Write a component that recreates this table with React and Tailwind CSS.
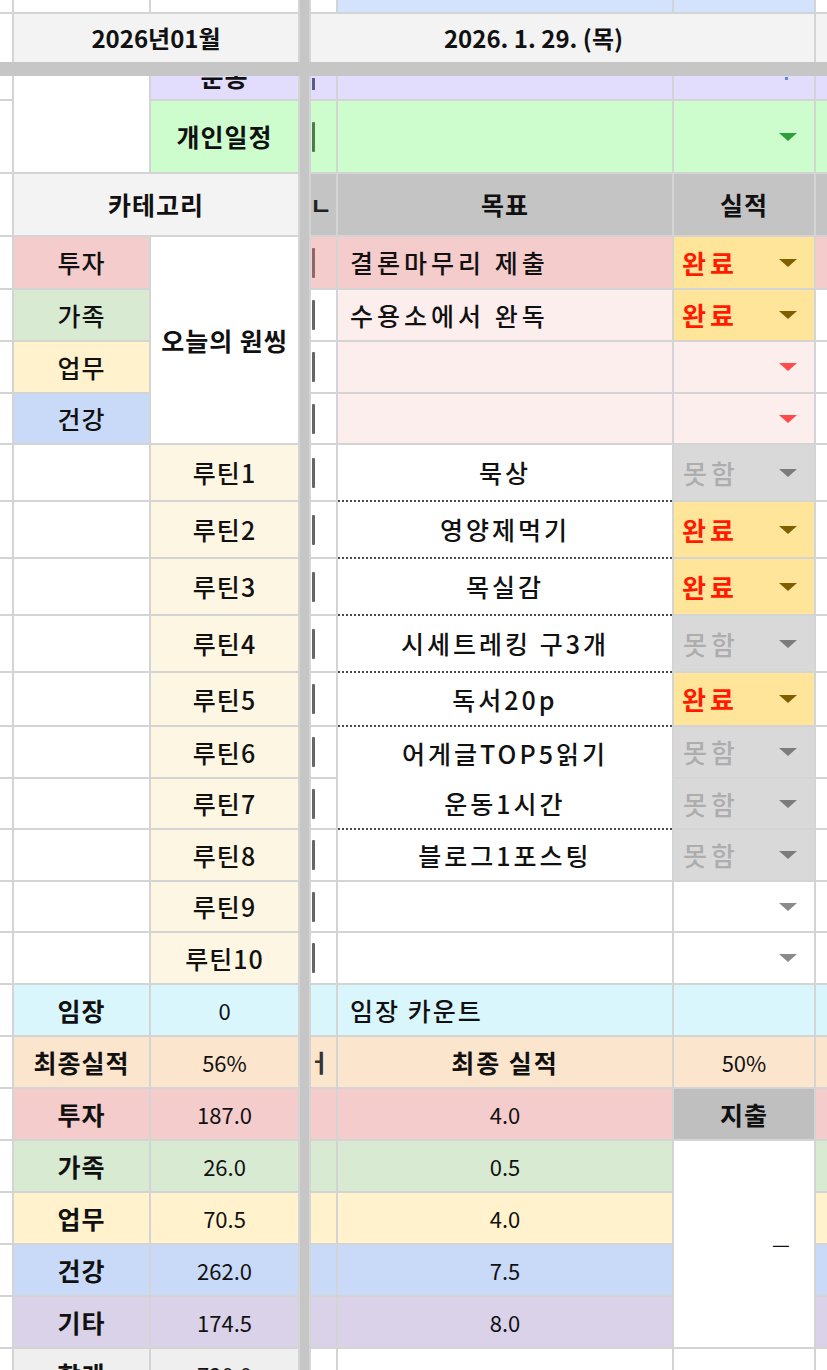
import React from "react";

// column template shared by the frozen header and the body
const GRID =
  "grid grid-cols-[12px_135px_147px_9px_25px_334px_140px_11px] gap-[2px] bg-[#d4d4d4]";

const categories = [
  { label: "투자", bg: "bg-[#f4cccc]", goal: "결론마무리 제출", goalBg: "bg-[#f4cccc]", status: "완료", edge: "bg-[#f4cccc]", sliver: "bg-[#8d6868]" },
  { label: "가족", bg: "bg-[#d9ead3]", goal: "수용소에서 완독", goalBg: "bg-[#fdeeee]", status: "완료", edge: "bg-white", sliver: "bg-[#666666]" },
  { label: "업무", bg: "bg-[#fff2cc]", goal: "", goalBg: "bg-[#fdeeee]", status: "pink", edge: "bg-white", sliver: "bg-[#666666]" },
  { label: "건강", bg: "bg-[#c9daf8]", goal: "", goalBg: "bg-[#fdeeee]", status: "pink", edge: "bg-white", sliver: "bg-[#666666]" },
];

const routines = [
  { name: "묵상", status: "못함", line: "dotted" },
  { name: "영양제먹기", status: "완료", line: "dotted" },
  { name: "목실감", status: "완료", line: "dotted" },
  { name: "시세트레킹 구3개", status: "못함", line: "dotted" },
  { name: "독서20p", status: "완료", line: "dotted" },
  { name: "어게글TOP5읽기", status: "못함", line: "blank" },
  { name: "운동1시간", status: "못함", line: "dotted" },
  { name: "블로그1포스팅", status: "못함", line: "none" },
  { name: "", status: "white", line: "none" },
  { name: "", status: "white", line: "none" },
];

const lineClass = {
  dotted: "-mb-[2px] border-b-2 border-dotted border-[#4a4a4a]",
  blank: "-mb-[2px]",
  none: "",
};

const totals = [
  { label: "투자", total: "187.0", today: "4.0", bg: "bg-[#f4cccc]" },
  { label: "가족", total: "26.0", today: "0.5", bg: "bg-[#d9ead3]" },
  { label: "업무", total: "70.5", today: "4.0", bg: "bg-[#fff2cc]" },
  { label: "건강", total: "262.0", today: "7.5", bg: "bg-[#c9daf8]" },
  { label: "기타", total: "174.5", today: "8.0", bg: "bg-[#d9d2e9]" },
];

const Arrow = ({ color }) => (
  <svg width="18" height="8" viewBox="0 0 18 8" className="shrink-0">
    <polygon points="0,0 18,0 9,8" fill={color} />
  </svg>
);

const Sliver = ({ className = "bg-[#666666]" }) => (
  <span className={`block w-[3px] h-[30px] ml-[1px] rounded-[1px] ${className}`} />
);

// dropdown cell in the 실적 column
const Status = ({ status }) => {
  if (status === "완료")
    return (
      <div className="bg-[#ffe599] flex items-center justify-between pl-[8px] pr-[17px]">
        <span className="text-[26px] font-bold text-[#ff1a00] tracking-[4px] leading-none">완료</span>
        <Arrow color="#7f6000" />
      </div>
    );
  if (status === "못함")
    return (
      <div className="bg-[#d9d9d9] flex items-center justify-between pl-[9px] pr-[17px]">
        <span className="text-[26px] font-medium text-[#adadad] tracking-[4px] leading-none">못함</span>
        <Arrow color="#7c7c7c" />
      </div>
    );
  if (status === "pink")
    return (
      <div className="bg-[#fdeeee] flex items-center justify-end pr-[17px]">
        <Arrow color="#ff4a4a" />
      </div>
    );
  return (
    <div className="bg-white flex items-center justify-end pr-[17px]">
      <Arrow color="#8a8a8a" />
    </div>
  );
};

const App = () => {
  return (
    <div className="w-[827px] h-[1370px] overflow-hidden bg-white text-[#111] font-['Noto_Sans_CJK_KR','Noto_Sans',sans-serif]">
      {/* frozen header rows */}
      <div className={`${GRID} grid-rows-[12px_48px]`}>
        <div className="col-start-4 row-span-full bg-[#c6c6c6]" />
        <div className="bg-white" />
        <div className="bg-white" />
        <div className="bg-white" />
        <div className="bg-white" />
        <div className="bg-[#d3e3fd]" />
        <div className="bg-[#d3e3fd]" />
        <div className="bg-white" />

        <div className="bg-white" />
        <div className="col-span-2 bg-[#f3f3f3] flex items-center justify-center text-[24px] font-bold leading-none">
          2026년01월
        </div>
        <div className="col-span-3 bg-[#f3f3f3] flex items-center justify-center pr-[58px] text-[24px] font-bold leading-none">
          2026. 1. 29. (목)
        </div>
        <div className="bg-[#f3f3f3]" />
      </div>

      {/* frozen pane divider */}
      <div className="h-[14px] bg-[#c6c6c6]" />

      <div
        className={`${GRID} grid-rows-[23px_71px_61px_51px_50px_50px_49px_55px_55px_55px_55px_52px_50px_49px_50px_49px_50px_50px_50px_50px_50px_50px_50px_50px_50px]`}
      >
        <div className="col-start-4 row-span-full bg-[#c6c6c6]" />

        {/* 운동 (scrolled, cut off) */}
        <div className="bg-white" />
        <div className="row-span-2 bg-white" />
        <div className="overflow-hidden bg-[#e2dcfd] flex flex-col">
          <div className="-mt-[23px] h-[46px] shrink-0 flex items-center justify-center text-[25px] tracking-[1px] font-bold leading-none">
            운동
          </div>
        </div>
        <div className="bg-[#e2dcfd] flex items-start">
          <span className="block w-[3px] h-[12px] ml-[1px] mt-[2px] bg-[#5a5a8a]" />
        </div>
        <div className="bg-[#e2dcfd]" />
        <div className="bg-[#e2dcfd] flex justify-end pr-[26px]">
          <span className="block w-[3px] h-[3px] mt-[1px] bg-[#5b8be0]" />
        </div>
        <div className="bg-[#e2dcfd]" />

        {/* 개인일정 */}
        <div className="bg-white" />
        <div className="bg-[#cdfccd] flex items-center justify-center text-[25px] tracking-[1px] font-bold leading-none">
          개인일정
        </div>
        <div className="bg-[#cdfccd] flex items-center">
          <Sliver className="bg-[#4f7a4f]" />
        </div>
        <div className="bg-[#cdfccd]" />
        <div className="bg-[#cdfccd] flex items-center justify-end pr-[17px]">
          <Arrow color="#2e9e3a" />
        </div>
        <div className="bg-[#cdfccd]" />

        {/* 카테고리 header */}
        <div className="bg-white" />
        <div className="col-span-2 bg-[#f3f3f3] flex items-center justify-center text-[25px] tracking-[1px] font-bold leading-none">
          카테고리
        </div>
        <div className="bg-[#c4c4c4] flex items-center overflow-hidden">
          <span className="-ml-[1px] text-[24px] font-bold leading-none text-[#222]">ㄴ</span>
        </div>
        <div className="bg-[#c4c4c4] flex items-center justify-center text-[25px] tracking-[1px] font-bold leading-none">
          목표
        </div>
        <div className="bg-[#c4c4c4] flex items-center justify-center text-[25px] tracking-[1px] font-bold leading-none">
          실적
        </div>
        <div className="bg-[#c4c4c4]" />

        {/* categories with one thing of the day */}
        {categories.map((c, i) => (
          <React.Fragment key={c.label}>
            <div className="bg-white" />
            <div className={`${c.bg} flex items-center justify-center text-[25px] tracking-[1px] font-medium leading-none`}>
              {c.label}
            </div>
            {i === 0 && (
              <div className="row-span-4 bg-white flex items-center justify-center text-[25px] tracking-[1px] font-bold leading-none">
                오늘의 원씽
              </div>
            )}
            <div className={`${c.edge} flex items-center`}>
              <Sliver className={c.sliver} />
            </div>
            <div className={`${c.goalBg} flex items-center pl-[12px] text-[25px] font-medium tracking-[4px] leading-none`}>
              {c.goal}
            </div>
            <Status status={c.status} />
            <div className={c.edge} />
          </React.Fragment>
        ))}

        {/* routines */}
        {routines.map((r, i) => (
          <React.Fragment key={i}>
            <div className="bg-white" />
            <div className="bg-white" />
            <div className="bg-[#fdf6e3] flex items-center justify-center text-[25px] tracking-[1px] font-medium leading-none">
              루틴{i + 1}
            </div>
            <div className="bg-white flex items-center">
              <Sliver />
            </div>
            <div className={`bg-white flex items-center justify-center text-[25px] font-medium tracking-[3px] leading-none ${lineClass[r.line]}`}>
              {r.name}
            </div>
            <Status status={r.status} />
            <div className="bg-white" />
          </React.Fragment>
        ))}

        {/* 임장 */}
        <div className="bg-white" />
        <div className="bg-[#d9f6fd] flex items-center justify-center text-[25px] tracking-[1px] font-bold leading-none">임장</div>
        <div className="bg-[#d9f6fd] flex items-center justify-center text-[22px] leading-none">0</div>
        <div className="bg-[#d9f6fd]" />
        <div className="bg-[#d9f6fd] flex items-center pl-[12px] text-[25px] font-medium tracking-[2px] leading-none">임장 카운트</div>
        <div className="bg-[#d9f6fd]" />
        <div className="bg-[#d9f6fd]" />

        {/* 최종실적 */}
        <div className="bg-white" />
        <div className="bg-[#fce5cd] flex items-center justify-center text-[25px] tracking-[1px] font-bold leading-none">최종실적</div>
        <div className="bg-[#fce5cd] flex items-center justify-center text-[22px] leading-none">56%</div>
        <div className="bg-[#fce5cd] flex items-center overflow-hidden">
          <span className="-ml-[3px] text-[24px] font-bold leading-none text-[#333]">ㅓ</span>
        </div>
        <div className="bg-[#fce5cd] flex items-center justify-center text-[25px] font-bold tracking-[2px] leading-none">최종 실적</div>
        <div className="bg-[#fce5cd] flex items-center justify-center text-[22px] leading-none">50%</div>
        <div className="bg-[#fce5cd]" />

        {/* totals per category */}
        {totals.map((t, i) => (
          <React.Fragment key={t.label}>
            <div className="bg-white" />
            <div className={`${t.bg} flex items-center justify-center text-[25px] tracking-[1px] font-bold leading-none`}>{t.label}</div>
            <div className={`${t.bg} flex items-center justify-center text-[22px] leading-none`}>{t.total}</div>
            <div className={t.bg} />
            <div className={`${t.bg} flex items-center justify-center text-[22px] leading-none`}>{t.today}</div>
            {i === 0 && (
              <div className="bg-[#bfbfbf] flex items-center justify-center text-[25px] tracking-[1px] font-bold leading-none">지출</div>
            )}
            {i === 1 && (
              <div className="row-span-4 bg-white flex items-center justify-end pr-[24px] text-[20px] leading-none">—</div>
            )}
            <div className={t.bg} />
          </React.Fragment>
        ))}

        {/* 합계 */}
        <div className="bg-white" />
        <div className="bg-[#efefef] flex items-center justify-center text-[25px] tracking-[1px] font-bold leading-none">합계</div>
        <div className="bg-[#efefef] flex items-center justify-center text-[22px] leading-none">720.0</div>
        <div className="bg-white" />
        <div className="bg-white" />
        <div className="bg-white" />
        <div className="bg-white" />
      </div>
    </div>
  );
};

export default App;
